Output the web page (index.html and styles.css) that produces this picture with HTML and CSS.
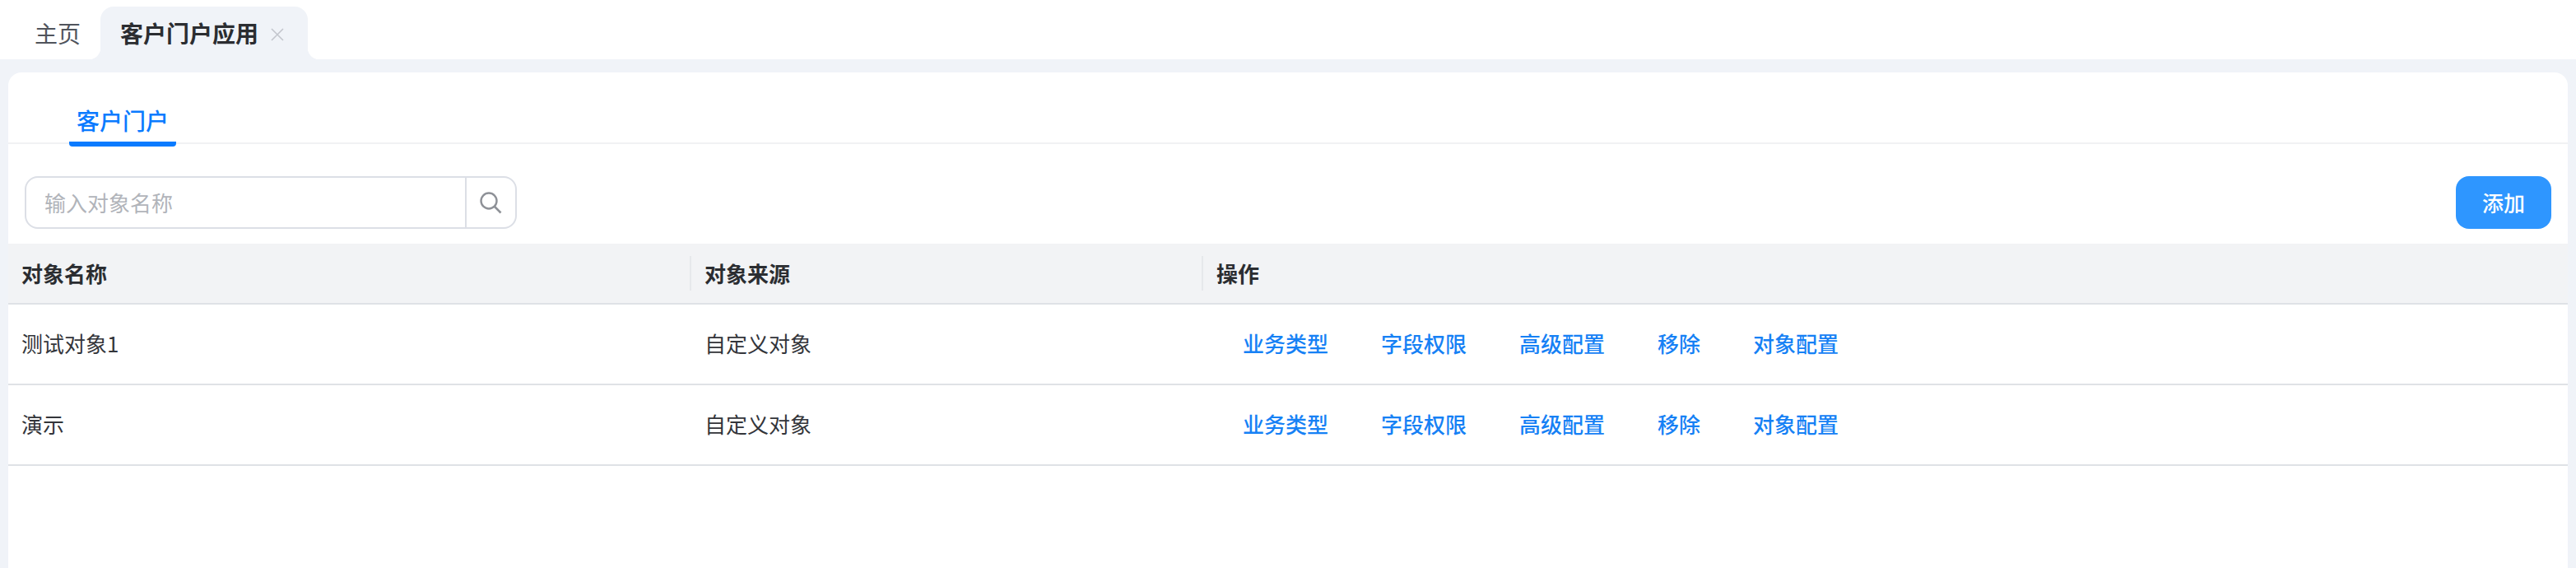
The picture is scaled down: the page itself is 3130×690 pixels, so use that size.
FILE: index.html
```html
<!DOCTYPE html>
<html lang="zh-CN">
<head>
    <meta charset="UTF-8">
    <title>客户门户应用</title>
    <link rel="stylesheet" href="styles.css">
</head>
<body>

<div class="tab-bar">
    <div class="tab">主页</div>
    <div class="tab tab-active">
        客户门户应用
        <svg class="tab-close" viewBox="0 0 16 16" width="16" height="16">
            <path d="M1 1 L15 15 M15 1 L1 15" stroke="#c3c6cd" stroke-width="1.6" fill="none"/>
        </svg>
    </div>
</div>

<div class="content">
    <div class="panel">
        <div class="sub-tabs">
            <div class="sub-tab">客户门户</div>
        </div>

        <div class="toolbar">
            <div class="search">
                <div class="search-input">输入对象名称</div>
                <div class="search-btn">
                    <svg viewBox="0 0 28 28" width="28" height="28">
                        <circle cx="12" cy="12" r="9.5" stroke="#8e9197" stroke-width="2.4" fill="none"/>
                        <path d="M19 19 L26.5 26.5" stroke="#8e9197" stroke-width="2.6" fill="none"/>
                    </svg>
                </div>
            </div>
            <button class="add-btn">添加</button>
        </div>

        <table class="object-table">
            <thead>
                <tr>
                    <th class="col-name">对象名称</th>
                    <th class="col-source">对象来源</th>
                    <th>操作</th>
                </tr>
            </thead>
            <tbody>
                <tr>
                    <td>测试对象1</td>
                    <td>自定义对象</td>
                    <td>
                        <div class="actions">
                            <a>业务类型</a>
                            <a>字段权限</a>
                            <a>高级配置</a>
                            <a>移除</a>
                            <a>对象配置</a>
                        </div>
                    </td>
                </tr>
                <tr>
                    <td>演示</td>
                    <td>自定义对象</td>
                    <td>
                        <div class="actions">
                            <a>业务类型</a>
                            <a>字段权限</a>
                            <a>高级配置</a>
                            <a>移除</a>
                            <a>对象配置</a>
                        </div>
                    </td>
                </tr>
            </tbody>
        </table>
    </div>
</div>

</body>
</html>
```

FILE: styles.css
```css
* {
    box-sizing: border-box;
}
html, body {
    height: 100%;
}
body {
    margin: 0;
    display: flex;
    flex-direction: column;
    font-family: "Noto Sans CJK SC", "Liberation Sans", sans-serif;
    font-size: 26px;
    color: #2b2d31;
    background: #f0f3f8;
}

/* top tabs */
.tab-bar {
    display: flex;
    height: 72px;
    padding: 8px 0 0 18px;
    background: white;
}
.tab {
    display: flex;
    align-items: center;
    padding: 0 24px;
    font-size: 28px;
    color: #50545c;
}
.tab-active {
    position: relative;
    width: 252px;
    font-weight: 700;
    color: #2b2d31;
    background: #f0f3f8;
    border-radius: 16px 16px 0 0;
}
.tab-active::before,
.tab-active::after {
    content: "";
    position: absolute;
    bottom: 0;
    width: 14px;
    height: 14px;
}
.tab-active::before {
    left: -14px;
    background: radial-gradient(circle at 0 0, white 14px, #f0f3f8 14.5px);
}
.tab-active::after {
    right: -14px;
    background: radial-gradient(circle at 100% 0, white 14px, #f0f3f8 14.5px);
}
.tab-close {
    margin: 3px 0 0 15px;
}

/* page */
.content {
    flex: 1;
    padding: 16px 10px 0;
}
.panel {
    height: 100%;
    background: white;
    border-radius: 16px 16px 0 0;
}
.sub-tabs {
    height: 87px;
    padding-left: 74px;
    border-bottom: 2px solid #f1f2f4;
}
.sub-tab {
    width: 130px;
    height: 90px;
    padding-top: 38px;
    text-align: center;
    font-size: 28px;
    font-weight: 500;
    line-height: 40px;
    color: #0a7bff;
    border-bottom: 6px solid #0a7bff;
    border-radius: 0 0 4px 4px;
}

.toolbar {
    display: flex;
    justify-content: space-between;
    align-items: flex-start;
    height: 121px;
    padding: 39px 20px 0;
}
.search {
    display: flex;
    width: 598px;
    height: 64px;
    border: 2px solid #dcdfe6;
    border-radius: 16px;
}
.search-input {
    flex: 1;
    padding-left: 22px;
    line-height: 60px;
    color: #b1b4ba;
}
.search-btn {
    display: flex;
    align-items: center;
    justify-content: center;
    width: 61px;
    padding-right: 2px;
    border-left: 2px solid #dcdfe6;
}
.add-btn {
    width: 116px;
    height: 64px;
    padding: 0 0 2px;
    border: none;
    border-radius: 16px;
    font-family: inherit;
    font-size: 26px;
    font-weight: 500;
    color: white;
    background: #2e96ff;
}

/* table */
.object-table {
    width: 100%;
    border-collapse: collapse;
    table-layout: fixed;
}
th {
    height: 73px;
    padding: 0 16px 2px;
    text-align: left;
    font-size: 26px;
    font-weight: 700;
    color: #2b2d31;
    background: #f2f3f5;
    border-bottom: 2px solid #dfe2e6;
}
th.col-name {
    width: 830px;
    background: #f2f3f5 linear-gradient(#e6e8eb, #e6e8eb) right center / 2px 42px no-repeat;
}
th.col-source {
    width: 622px;
    background: #f2f3f5 linear-gradient(#e6e8eb, #e6e8eb) right center / 2px 42px no-repeat;
}
td {
    height: 98px;
    padding: 0 16px 3px;
    color: #33353a;
    border-bottom: 2px solid #dfe2e6;
}
.actions {
    display: flex;
    gap: 64px;
    padding-left: 32px;
}
.actions a {
    font-weight: 500;
    color: #1681f5;
    cursor: pointer;
}
```
